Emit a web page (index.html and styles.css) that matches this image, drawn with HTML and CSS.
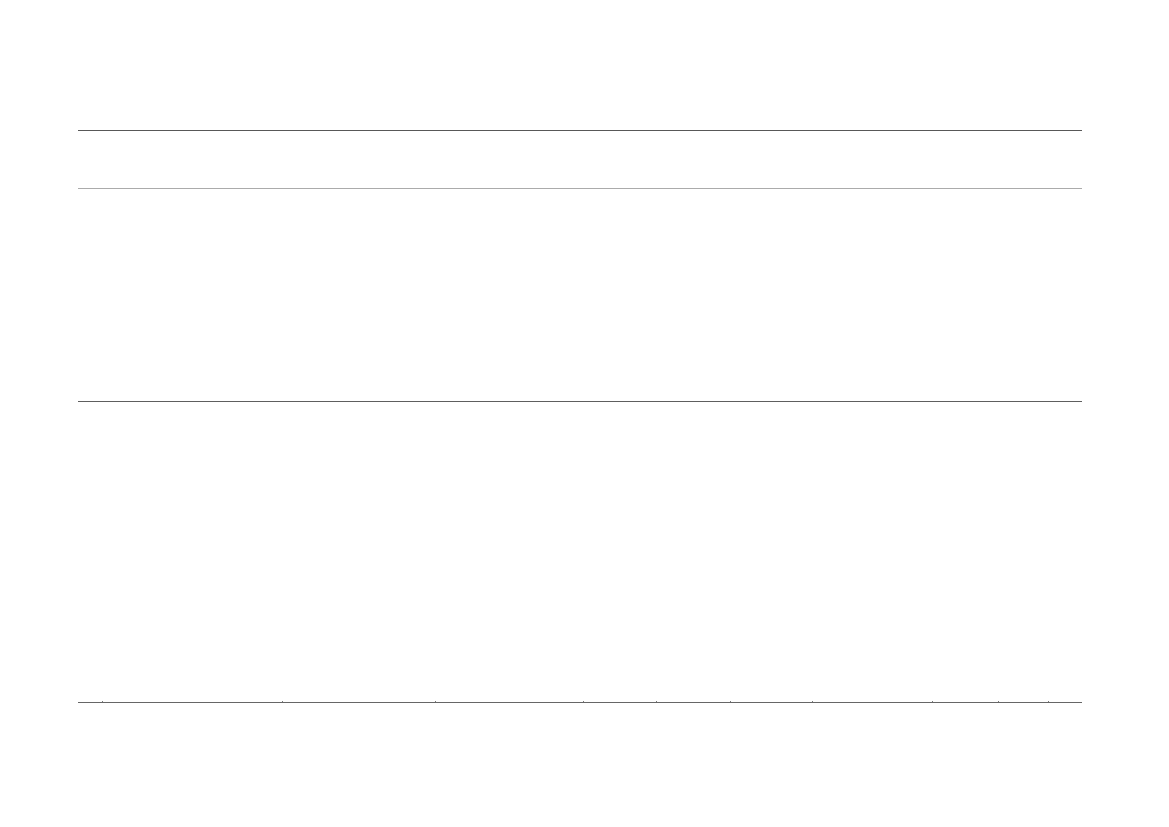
FILE: index.html
```html
<!DOCTYPE html>
<html lang="en">
<head>
<meta charset="utf-8">
<title>Table</title>
<link rel="stylesheet" href="styles.css">
</head>
<body>
<div class="table" role="table">
  <div class="row head" role="row">
    <div class="cell" role="columnheader"></div><div class="cell" role="columnheader"></div><div class="cell" role="columnheader"></div><div class="cell" role="columnheader"></div><div class="cell" role="columnheader"></div><div class="cell" role="columnheader"></div><div class="cell" role="columnheader"></div><div class="cell" role="columnheader"></div><div class="cell" role="columnheader"></div><div class="cell" role="columnheader"></div><div class="cell" role="columnheader"></div>
  </div>
  <div class="row r1" role="row">
    <div class="cell" role="cell"></div><div class="cell" role="cell"></div><div class="cell" role="cell"></div><div class="cell" role="cell"></div><div class="cell" role="cell"></div><div class="cell" role="cell"></div><div class="cell" role="cell"></div><div class="cell" role="cell"></div><div class="cell" role="cell"></div><div class="cell" role="cell"></div><div class="cell" role="cell"></div>
  </div>
  <div class="row r2" role="row">
    <div class="cell" role="cell"></div><div class="cell" role="cell"></div><div class="cell" role="cell"></div><div class="cell" role="cell"></div><div class="cell" role="cell"></div><div class="cell" role="cell"></div><div class="cell" role="cell"></div><div class="cell" role="cell"></div><div class="cell" role="cell"></div><div class="cell" role="cell"></div><div class="cell" role="cell"></div>
  </div>
</div>
</body>
</html>
```
FILE: styles.css
```css
html, body {
  margin: 0;
  padding: 0;
  background: #ffffff;
  font-family: "Liberation Sans", Arial, sans-serif;
}

body {
  padding-top: 130px;
  padding-left: 78px;
}

.table {
  width: 1004px;
  border-top: 1px solid #585858;
}

.row {
  display: grid;
  grid-template-columns: 24px 180px 153px 148px 73px 74px 82px 120px 66px 50px 34px;
  border-bottom: 1px solid #5e5e5e;
}

.head {
  height: 57px;
  border-bottom-color: #ababab;
}

.r1 {
  height: 212px;
}

.r2 {
  height: 300px;
  border-bottom-color: #666666;
}

.r2 .cell + .cell {
  background: linear-gradient(#7a7a7a, #7a7a7a) left bottom / 1px 1px no-repeat;
}
```
